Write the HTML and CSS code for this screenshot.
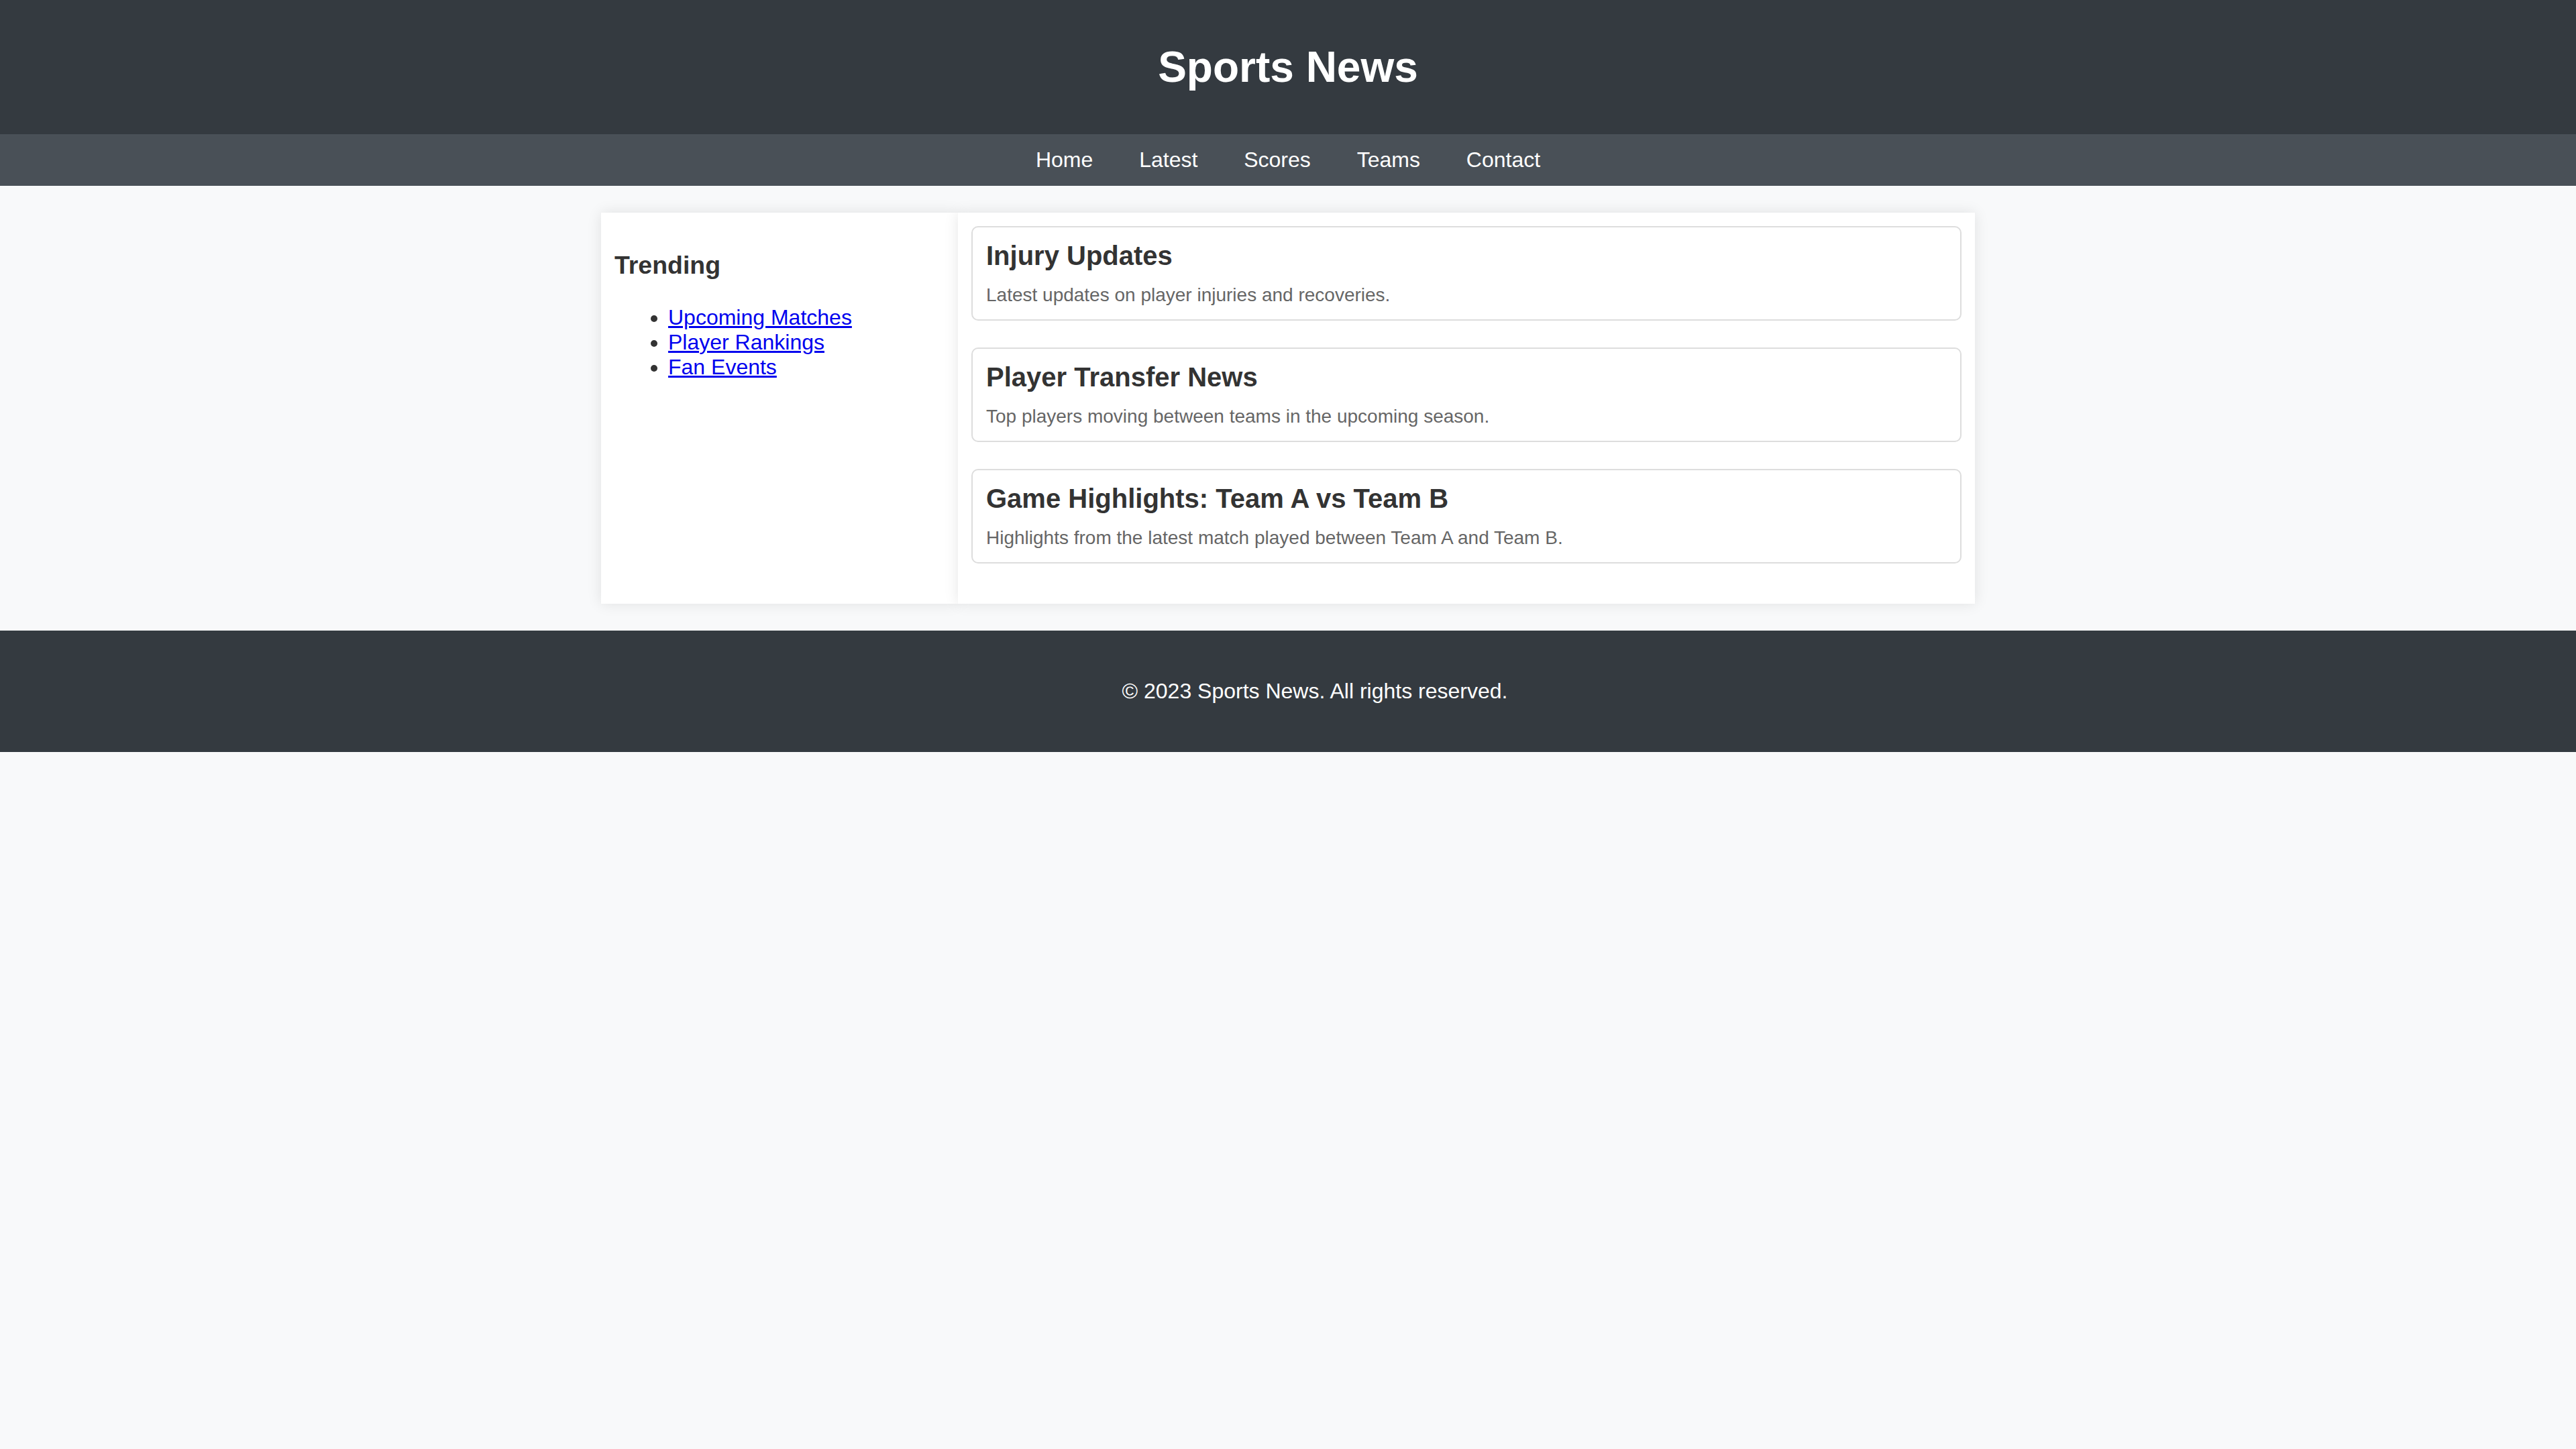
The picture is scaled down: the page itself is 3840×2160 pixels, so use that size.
FILE: index.html
```html
<!DOCTYPE html>
<html lang="en">
<head>
<meta charset="utf-8">
<title>Sports News</title>
<link rel="stylesheet" href="styles.css">
</head>
<body>
<header class="site-header">
  <h1 class="site-title">Sports News</h1>
</header>
<nav class="site-nav">
  <a href="#">Home</a>
  <a href="#">Latest</a>
  <a href="#">Scores</a>
  <a href="#">Teams</a>
  <a href="#">Contact</a>
</nav>
<div class="container">
  <aside class="sidebar">
    <h3 class="sidebar-title">Trending</h3>
    <ul class="trend-list">
      <li><a href="#">Upcoming Matches</a></li>
      <li><a href="#">Player Rankings</a></li>
      <li><a href="#">Fan Events</a></li>
    </ul>
  </aside>
  <main class="main">
    <article class="card">
      <h2 class="card-title">Injury Updates</h2>
      <p class="card-text">Latest updates on player injuries and recoveries.</p>
    </article>
    <article class="card">
      <h2 class="card-title">Player Transfer News</h2>
      <p class="card-text">Top players moving between teams in the upcoming season.</p>
    </article>
    <article class="card">
      <h2 class="card-title">Game Highlights: Team A vs Team B</h2>
      <p class="card-text">Highlights from the latest match played between Team A and Team B.</p>
    </article>
  </main>
</div>
<footer class="site-footer">
  <p class="footer-text">&copy; 2023 Sports News. All rights reserved.</p>
</footer>
</body>
</html>
```
FILE: styles.css
```css
html, body {
  margin: 0;
  padding: 0;
}

body {
  background: #f8f9fa;
  color: #333333;
  font-family: "Liberation Sans", Arial, Helvetica, sans-serif;
  font-size: 32px;
}

.site-header {
  background: #343a40;
  color: #ffffff;
  text-align: center;
  padding: 20px 0;
}

.site-title {
  margin: 42.88px 0;
  font-size: 64px;
  font-weight: bold;
}

.site-nav {
  background: #495057;
  text-align: center;
  padding: 20px 0;
}

.site-nav a {
  color: #ffffff;
  text-decoration: none;
  margin: 0 30px;
  font-size: 32px;
}

.container {
  display: flex;
  width: 2048px;
  margin: 40px auto;
}

.sidebar {
  flex: 1;
  padding: 20px;
  background: #ffffff;
  box-shadow: 0 0 20px rgba(0, 0, 0, 0.1);
}

.sidebar-title {
  font-size: 37.44px;
  margin: 37.44px 0;
  color: #333333;
}

.trend-list {
  margin: 32px 0;
  padding-left: 80px;
  font-size: 32px;
}

.trend-list a {
  color: #0000ee;
}

.main {
  flex: 3;
  padding: 20px;
  background: #ffffff;
  box-shadow: 0 0 20px rgba(0, 0, 0, 0.1);
}

.card {
  border: 2px solid #dddddd;
  border-radius: 10px;
  padding: 20px;
  margin-bottom: 40px;
  background: #ffffff;
}

.card-title {
  margin: 0 0 20px;
  font-size: 40px;
  color: #333333;
}

.card-text {
  margin: 0;
  font-size: 28px;
  color: #666666;
}

.site-footer {
  width: 100%;
  background: #343a40;
  color: #ffffff;
  text-align: center;
  padding: 40px;
}

.footer-text {
  margin: 32px 0;
  font-size: 32px;
}
```
